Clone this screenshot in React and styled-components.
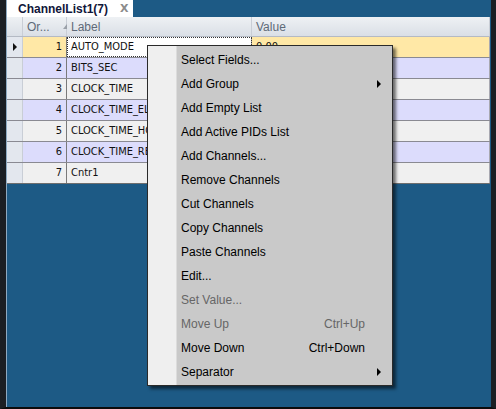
import React from 'react'
import styled, { createGlobalStyle } from 'styled-components'

const Global = createGlobalStyle`
    html, body { margin: 0; padding: 0; }
    body { background: #1d5a85; }
`

const Frame = styled.div`
    width: 496px;
    height: 409px;
    box-sizing: border-box;
    background: #1d5a85;
    border-left: 6px solid #1b1f24;
    border-right: 5px solid #1b1f24;
    border-bottom: 2px solid #0c0c0c;
    position: relative;
    overflow: hidden;
`

const Content = styled.div`
    height: 100%;
    border-left: 1px solid #8eaac2;
    box-sizing: border-box;
    display: flex;
    flex-direction: column;
`

const TabStrip = styled.div`
    height: 17px;
    display: flex;
`

const Tab = styled.div`
    width: 126px;
    background: #ffffff;
    display: flex;
    align-items: center;
    box-sizing: border-box;
    padding-left: 11px;
    font-family: "Liberation Sans", Arial, sans-serif;
    font-weight: bold;
    font-size: 12px;
    color: #10163a;
`

const Close = styled.span`
    margin-left: 12px;
    color: #8c8c8c;
    font-size: 11px;
    font-family: "DejaVu Sans", sans-serif;
    font-weight: bold;
`

const Grid = styled.div`
    width: 483px;
    font-family: "DejaVu Sans Condensed", "Liberation Sans", sans-serif;
    font-size: 11px;
`

const Row = styled.div`
    display: grid;
    grid-template-columns: 16px 44px 185px 1fr;
    height: ${p => p.$h || 21}px;
    box-sizing: border-box;
    border-bottom: 1px solid ${p => p.$line || '#a8a8b0'};
    background: ${p => p.$bg};
`

const HeadCell = styled.div`
    display: flex;
    align-items: center;
    padding-left: 4px;
    color: #5e6a78;
    background: linear-gradient(#eef1f4, #dadfe6);
    border-right: 1px solid #c9ced6;
    font-family: "Liberation Sans", Arial, sans-serif;
    font-size: 12px;
    box-sizing: border-box;
`

const SortArrow = styled.span`
    margin-left: 13px;
    width: 0;
    height: 0;
    border-left: 4px solid transparent;
    border-right: 4px solid transparent;
    border-bottom: 5px solid #9aa0a8;
`

const Indicator = styled.div`
    background: #e3e7ee;
    border-right: 1px solid #c9ced6;
    display: flex;
    align-items: center;
    justify-content: center;
`

const Pointer = styled.span`
    width: 0;
    height: 0;
    border-top: 4px solid transparent;
    border-bottom: 4px solid transparent;
    border-left: 4px solid #111;
`

const NumCell = styled.div`
    text-align: right;
    padding-right: 4px;
    line-height: 20px;
    border-right: 1px solid #7a7a7a;
    color: #111;
`

const TextCell = styled.div`
    padding-left: 4px;
    line-height: 20px;
    color: #111;
    white-space: nowrap;
    overflow: hidden;
    border-right: 1px solid #a8a8b0;
    ${p => p.$focus && `
        background: #ffffff;
        outline: 1px dotted #333;
        outline-offset: -1px;
    `}
`

const Menu = styled.div`
    position: absolute;
    left: 141px;
    top: 45px;
    width: 246px;
    box-sizing: border-box;
    background: linear-gradient(90deg, #efefef 0, #efefef 28px, #dcdcdc 28px, #dcdcdc 29px, #c9c9c9 29px);
    border: 1px solid #2a2a2a;
    padding: 2px 0 1px;
    box-shadow: 3px 3px 3px rgba(0, 0, 0, 0.55);
    font-family: "Liberation Sans", Arial, sans-serif;
    font-size: 12px;
`

const Item = styled.div`
    height: 24px;
    display: flex;
    align-items: center;
    padding-left: 33px;
    padding-right: 27px;
    color: ${p => p.$disabled ? '#666666' : '#000'};
`

const Label = styled.span`
    flex: 1;
`

const Shortcut = styled.span``

const SubArrow = styled.span`
    position: absolute;
    right: 11px;
    width: 0;
    height: 0;
    border-top: 4px solid transparent;
    border-bottom: 4px solid transparent;
    border-left: 4px solid #000;
`

const rows = [
    { n: 1, label: 'AUTO_MODE', value: '0.00', bg: '#ffe8a6', focus: true },
    { n: 2, label: 'BITS_SEC', bg: '#dcdcfc' },
    { n: 3, label: 'CLOCK_TIME', bg: '#f0f0f0' },
    { n: 4, label: 'CLOCK_TIME_ELAPSED', bg: '#dcdcfc' },
    { n: 5, label: 'CLOCK_TIME_HOURS', bg: '#f0f0f0' },
    { n: 6, label: 'CLOCK_TIME_REMAINING', bg: '#dcdcfc' },
    { n: 7, label: 'Cntr1', bg: '#f0f0f0', last: true },
]

const items = [
    { t: 'Select Fields...' },
    { t: 'Add Group', sub: true },
    { t: 'Add Empty List' },
    { t: 'Add Active PIDs List' },
    { t: 'Add Channels...' },
    { t: 'Remove Channels' },
    { t: 'Cut Channels' },
    { t: 'Copy Channels' },
    { t: 'Paste Channels' },
    { t: 'Edit...' },
    { t: 'Set Value...', off: true },
    { t: 'Move Up', k: 'Ctrl+Up', off: true },
    { t: 'Move Down', k: 'Ctrl+Down' },
    { t: 'Separator', sub: true },
]

export default function App() {
    return (
        <Frame>
            <Global />
            <Content>
                <TabStrip>
                    <Tab>ChannelList1(7)<Close>X</Close></Tab>
                </TabStrip>
                <Grid>
                    <Row $h={20} $line="#b4bac4">
                        <HeadCell />
                        <HeadCell>Or...<SortArrow /></HeadCell>
                        <HeadCell>Label</HeadCell>
                        <HeadCell>Value</HeadCell>
                    </Row>
                    {rows.map(r => (
                        <Row key={r.n} $bg={r.bg} $line={r.last ? '#6e6e6e' : '#8a8a92'}>
                            <Indicator>{r.focus && <Pointer />}</Indicator>
                            <NumCell>{r.n}</NumCell>
                            <TextCell $focus={r.focus}>{r.label}</TextCell>
                            <TextCell>{r.value}</TextCell>
                        </Row>
                    ))}
                </Grid>
            </Content>
            <Menu>
                {items.map(i => (
                    <Item key={i.t} $disabled={i.off}>
                        <Label>{i.t}</Label>
                        {i.k && <Shortcut>{i.k}</Shortcut>}
                        {i.sub && <SubArrow />}
                    </Item>
                ))}
            </Menu>
        </Frame>
    )
}
